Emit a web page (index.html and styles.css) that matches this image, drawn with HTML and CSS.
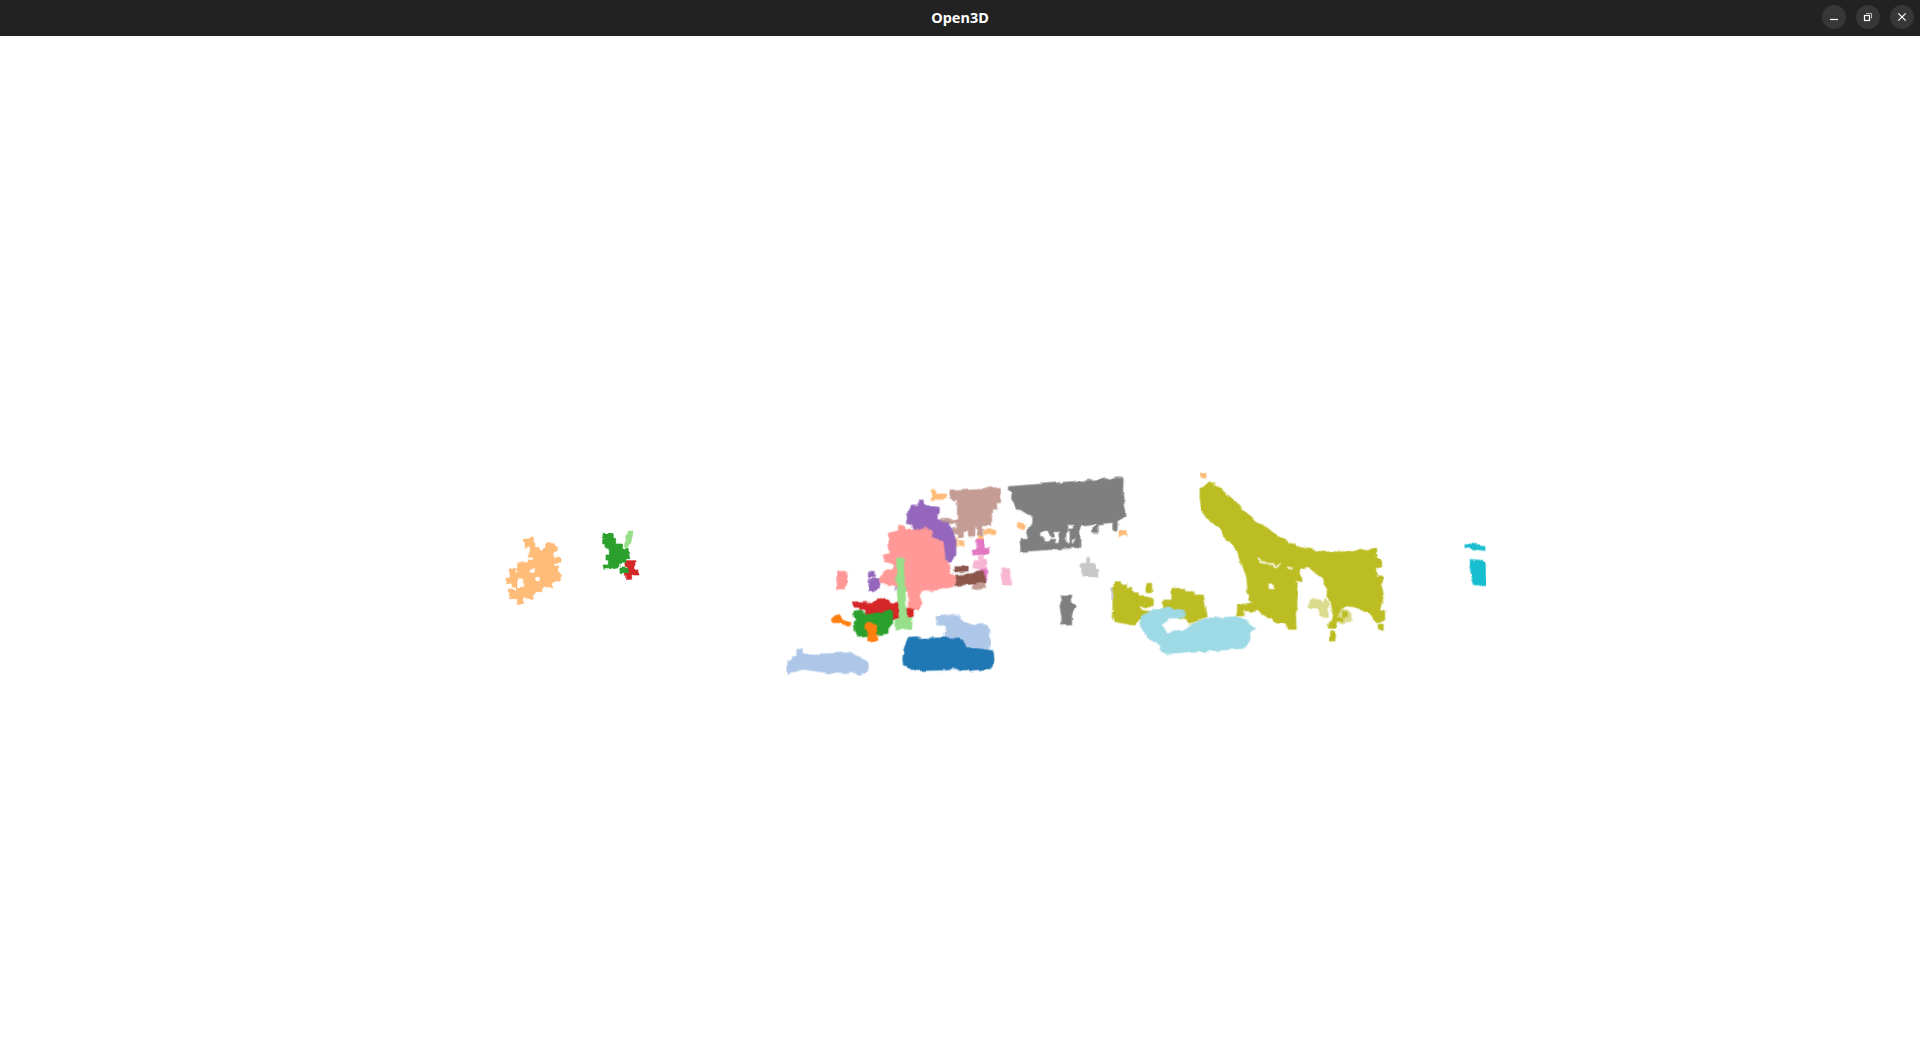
FILE: index.html
```html
<!DOCTYPE html>
<html>
<head>
    <title>Open3D</title>
    <link rel="stylesheet" href="styles.css">
</head>
<body>
    <header class="titlebar">
        <div></div>
        <div class="title">Open3D</div>
        <div class="window-buttons">
            <button class="window-button">
                <svg viewBox="0 0 24 24"><path d="M8 14.500H16" class="glyph"/></svg>
            </button>
            <button class="window-button">
                <svg viewBox="0 0 24 24"><rect x="8.500" y="10.500" width="5" height="5" class="glyph"/><path d="M10 8.500H15.500V13.500" class="glyph thin"/></svg>
            </button>
            <button class="window-button">
                <svg viewBox="0 0 24 24"><path d="M8.300 8.300L15.700 15.700M15.700 8.300L8.300 15.700" class="glyph"/></svg>
            </button>
        </div>
    </header>

    <main class="viewport">
        <!-- viewBox starts at y=36 so the numbers are window coordinates -->
        <svg class="cloud" viewBox="0 36 1920 1016">
            <defs>
                <!-- roughens the outlines so they read as a point cloud -->
                <filter id="rough" x="0" y="0" width="100%" height="100%" color-interpolation-filters="sRGB">
                    <feTurbulence type="fractalNoise" baseFrequency="0.14" numOctaves="1" seed="4" result="noise"/>
                    <feDisplacementMap in="SourceGraphic" in2="noise" scale="5" xChannelSelector="R" yChannelSelector="G"/>
                </filter>
            </defs>

            <g filter="url(#rough)">
                <g transform="translate(480 500) scale(0.3333)">
                    <path class="c-lorange" fill-rule="evenodd" d="M130 114H160V128H165V140H175V152H190V145H197V128H225L232 138V155H222V172H243V190H222V198H236V212L244 222V246H218V264H196V262H186V275H165V282H160V295H132V310H112V296H88V270H110V262H96V250H78V234H90V205H106V218H113V188H145V180H160V172H145V155H150V142H135V128H130ZM114 235H130V262H114ZM147 204H165V216H147ZM165 230H180V244H165Z"/>
                    <path class="c-lgreen" d="M445 93H460L450 135L440 150H430L437 125Z"/>
                    <path class="c-red" d="M435 182H465V210H477V225H455V241H440V226H433V218H443V200H435Z"/>
                    <path class="c-green" d="M366 100H400V115H407V132H425V146H445V162L450 176H438V190H420V200L372 208L369 195H385V180H378V162H388V145H375V132H368V118H372V114H366ZM420 204H445V218H420Z"/>
                </g>

                <g transform="translate(760 460) scale(0.3333)">
                    <path class="c-lorange" d="M514 92H528V102H557V118H514ZM672 209H705V224H672ZM772 191H792V206H772ZM1077 212H1102V227H1077ZM596 243H612V260H596ZM580 232H592V260H580ZM655 226H668V240H655Z"/>
                    <path class="c-rosy" d="M570 90L722 82V125H710V150H695V197H668V225H650V200H642V228H625V215H610V232H595V222H578V205H590V188H542V178H592V120H578V115H568Z"/>
                    <path class="c-gray" fill-rule="evenodd" d="M745 80L1090 53L1088 110L1098 155L1096 170L1072 183V210H1058V187L1015 192V217H998V202L1015 190L960 195V262L782 275L780 235H800L805 205L815 190V165L790 160L770 145L755 120V100L745 90ZM840 215H870V228H880V215H900V250H885V235H870V245H850V230H840ZM920 197H940V207H920ZM918 212H930V250H918ZM935 235H945V250H935Z"/>
                    <path class="c-purple" d="M328 334H343V350H328ZM328 356H360V378L345 392H326ZM392 265H402V285H392Z"/>
                    <path class="c-lpurple" d="M402 310H412V340H402ZM402 375H415V392H402Z"/>
                    <path class="c-pink" d="M232 334H258L260 365L256 390H233L230 355Z"/>
                    <g transform="translate(360 90)">
                        <path class="c-purple" d="M118 30H133V45L165 50L178 52V70L172 72V92L205 97L218 125L228 150V195L210 218L190 205L185 180L130 170L95 105L80 95L78 75L90 60L95 45H118Z"/>
                        <path class="c-pink" d="M55 105L75 108V120H120L135 110L155 125V145L190 155L195 205L205 215L210 250L232 260L220 290L170 300L122 305V345L118 360H85V305L60 300L40 285L0 280V258L20 238L35 240L48 225L15 215L10 195L30 190L25 150V130L55 122Z"/>
                    </g>
                    <path class="c-red" d="M278 426L310 424L320 430H338L355 416H375L395 428H408L415 425V445H450L460 450V470H440V478H395V458L320 465L315 452L300 450L298 442H280Z"/>
                    <path class="c-lgreen" d="M410 294H430L440 470H456V505L405 511V475H418L410 380Z"/>
                    <path class="c-green" d="M282 453L300 450L320 465L390 450L398 458V490L385 505L384 520L350 525L320 530L295 532L285 510L282 490L290 478L282 470Z"/>
                    <path class="c-orange" d="M315 492L335 488L348 500L354 540L340 548L322 540L325 522L315 505ZM218 476L230 466L242 470L248 480L272 488V498L250 497L240 488H218Z"/>
                    <path class="c-lblue" d="M528 470L545 465H600L612 490L680 495L690 510V568L610 560L580 535L552 530V518H558L555 505V495H530ZM80 602H97V590H110V568H127V582L170 582L270 578L310 598L322 605V625L316 640L298 648L285 635L230 640L200 638L130 628L80 640Z"/>
                    <path class="c-blue" d="M445 532L470 530L490 535L570 533L605 540L625 562L700 572L703 605L695 625L630 632L600 628L550 630L470 632L430 615L428 600L433 560Z"/>
                    <path class="c-orchid" d="M650 240H670V265H690V282L638 285V270H650ZM660 322H680V360H660Z"/>
                    <path class="c-lpink" d="M655 288H670V300H680V325H642V302H655ZM725 323H752L755 375H730L723 345Z"/>
                    <path class="c-rosy" d="M640 370L655 355H670L678 385L640 390Z"/>
                    <path class="c-brown" d="M582 320H625V333L582 336ZM590 345L640 340L650 333H670L678 365L640 372L584 377Z"/>
                    <path class="c-lgray" d="M980 295H992V310H1005V328H1016V352L968 345V322H962V310H980Z"/>
                    <path class="c-gray" d="M903 405H932V425L947 440L935 465V495H905V470L900 440L906 420Z"/>
                </g>

                <g transform="translate(1090 460) scale(0.3333)">
                    <path class="c-lorange" d="M333 39H348V54H333Z"/>
                    <g transform="translate(300 30)">
                        <path class="c-khaki" d="M355 405L362 385L392 390L395 405L408 385L415 405V443L388 440L385 415L353 412ZM445 425L470 418L483 425L485 452L460 462L440 458Z"/>
                        <path class="c-olive" fill-rule="evenodd" d="M30 55L60 35L72 40V48L95 55L130 92L160 118L195 155L240 180L270 205L330 232L400 246L480 245L560 235L562 260L550 262L575 272V290H557L560 320L578 322V335L572 340L582 382L575 412L570 420L584 425V450L565 460L550 445L540 430L490 410L465 408L445 430L438 462V475H415V462L430 440L412 370L397 320L365 300L355 290L330 295L328 300L335 320V333L312 335L322 345L318 400L322 478H292V462H262L245 445L210 430L205 422L180 428V420H160V438H142V405L190 398L175 390L170 320L145 255L130 225L110 210L90 175L65 160L35 120L30 85ZM235 340H255V358H235Z"/>
                        <path class="c-olive" d="M442 442H458V456H442ZM458 425H472V440H458Z"/>
                        <path class="gap" d="M203 266L215 278L245 282L258 290L275 280M292 295L312 292"/>
                    </g>
                    <path class="c-olive" d="M722 515H738L735 543H720ZM865 495H880V508H865Z"/>
                    <path class="c-lgray" d="M62 380H72V420H62ZM100 405H115V418H100Z"/>
                    <path class="c-olive" d="M72 365H92V372H110V385H125V398H145V410H170L190 420V440H150V450L185 455H220V420H245V400H243V385H285V395H310V405H340L352 470L300 490L285 475L240 470L150 480L130 495L75 485L67 460ZM168 370H185V398H172Z"/>
                    <path class="c-teal" d="M150 470L185 452L240 442L265 450L285 450V470L240 475L215 495L235 515L285 510L310 490L350 475L440 470L470 480L498 505L480 520L475 550L460 565L300 578L240 584L215 575L205 550L175 535L155 505Z"/>
                    <path class="c-white" d="M217 495L240 482L285 480L298 490L280 510L235 516Z"/>
                    <path class="c-cyan" d="M1125 250L1185 257V272L1125 263ZM1137 298L1186 302L1188 378L1153 374L1143 340Z"/>
                </g>
            </g>
        </svg>
    </main>
</body>
</html>
```

FILE: styles.css
```css
html, body {
    height: 100%;
}

body {
    margin: 0;
    display: flex;
    flex-direction: column;
    background-color: #fff;
    font-family: "Noto Sans", "Open Sans", sans-serif;
}

.titlebar {
    height: 36px;
    flex-shrink: 0;
    padding-bottom: 2px;
    box-sizing: border-box;
    display: grid;
    grid-template-columns: 1fr auto 1fr;
    align-items: center;
    background-color: #222;
    color: #fff;
}

.title {
    font-size: 14.500px;
    font-weight: 700;
}

.window-buttons {
    display: flex;
    justify-content: flex-end;
    gap: 10px;
    padding-right: 6px;
}

.window-button {
    width: 24px;
    height: 24px;
    padding: 0;
    border: none;
    border-radius: 50%;
    background-color: #373737;
}

.window-button svg {
    display: block;
    width: 24px;
    height: 24px;
}

.glyph {
    fill: none;
    stroke: #fff;
    stroke-width: 1.200;
}

.glyph.thin {
    stroke: #bbb;
    stroke-width: 1;
}

.viewport {
    flex: 1;
    min-height: 0;
}

.cloud {
    display: block;
    width: 100%;
    height: 100%;
}

.cloud path {
    stroke-width: 2;
    stroke-linejoin: round;
}

.cloud path.gap {
    fill: none;
    stroke: #fff;
    stroke-width: 4;
}

.c-blue { fill: #1f77b4; stroke: #1f77b4; }
.c-lblue { fill: #aec7e8; stroke: #aec7e8; }
.c-orange { fill: #ff7f0e; stroke: #ff7f0e; }
.c-lorange { fill: #ffbb78; stroke: #ffbb78; }
.c-green { fill: #2ca02c; stroke: #2ca02c; }
.c-lgreen { fill: #98df8a; stroke: #98df8a; }
.c-red { fill: #d62728; stroke: #d62728; }
.c-pink { fill: #ff9896; stroke: #ff9896; }
.c-purple { fill: #9467bd; stroke: #9467bd; }
.c-lpurple { fill: #c5b0d5; stroke: #c5b0d5; }
.c-brown { fill: #8c564b; stroke: #8c564b; }
.c-rosy { fill: #c49c94; stroke: #c49c94; }
.c-orchid { fill: #e377c2; stroke: #e377c2; }
.c-lpink { fill: #f7b6d2; stroke: #f7b6d2; }
.c-gray { fill: #7f7f7f; stroke: #7f7f7f; }
.c-lgray { fill: #c7c7c7; stroke: #c7c7c7; }
.c-olive { fill: #bcbd22; stroke: #bcbd22; }
.c-khaki { fill: #dbdb8d; stroke: #dbdb8d; }
.c-cyan { fill: #17becf; stroke: #17becf; }
.c-teal { fill: #9edae5; stroke: #9edae5; }
.c-white { fill: #fff; stroke: #fff; }
```
